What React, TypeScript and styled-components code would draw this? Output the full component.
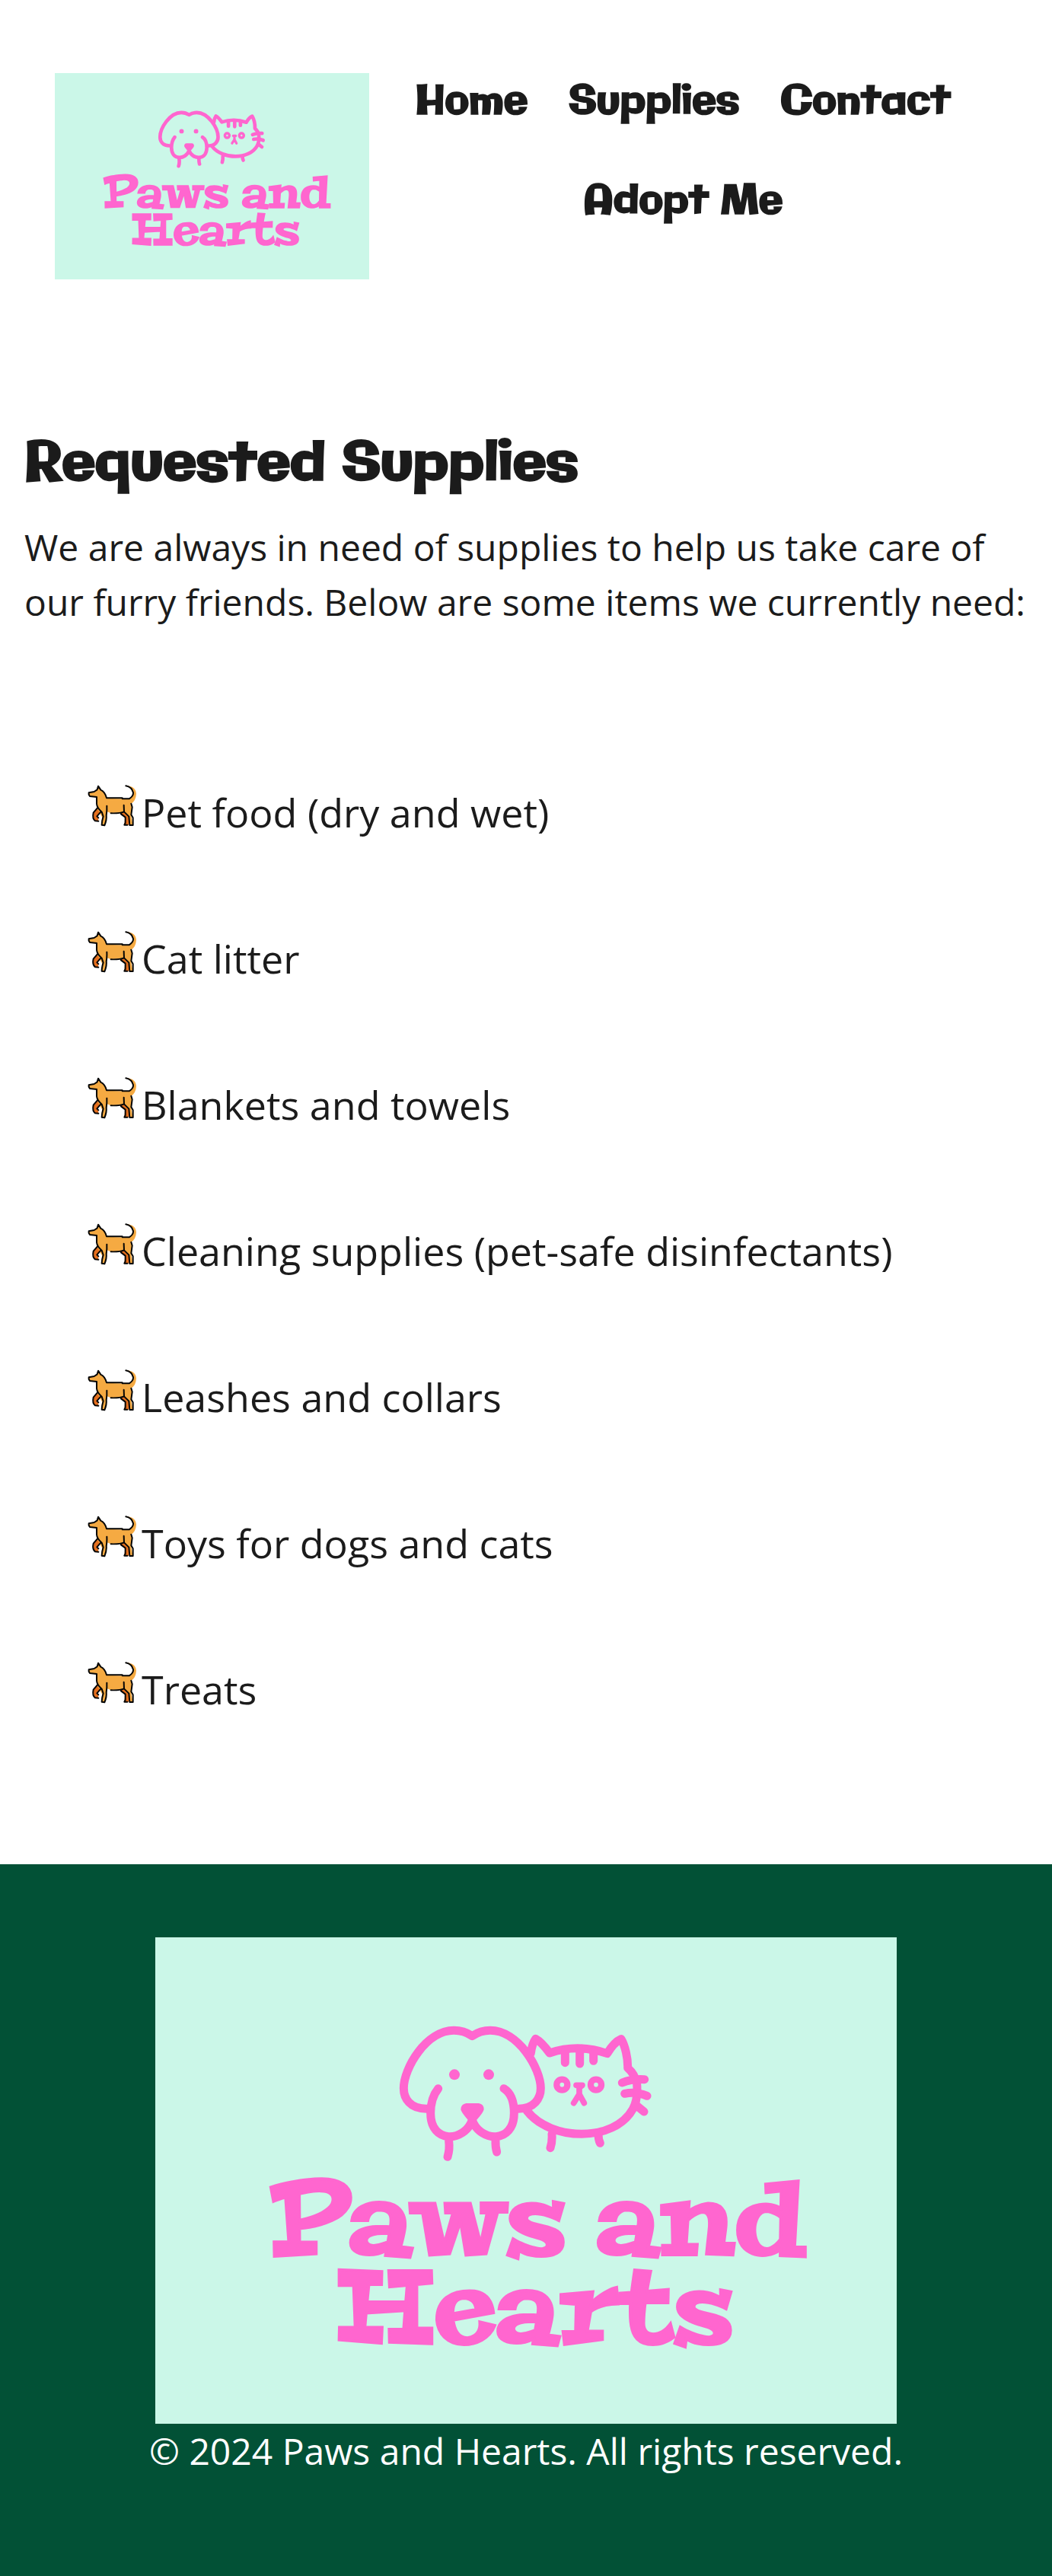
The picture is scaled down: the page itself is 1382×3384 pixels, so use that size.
import React from 'react';
import styled, { createGlobalStyle } from 'styled-components';

const ink = '#1b1b1b';
const pink = '#ff66cf';
const mint = '#cbf7e8';
const forest = '#025136';

const bodyFont = `'Open Sans', 'Noto Sans', sans-serif`;
const displayFont = `Galindo, Lato, 'Open Sans', sans-serif`;

const GlobalStyle = createGlobalStyle`
  *, *::before, *::after { box-sizing: border-box; }
  body {
    margin: 0;
    background: #fff;
    color: ${ink};
    font-family: ${bodyFont};
    font-size: 48px;
    line-height: 72px;
  }
`;

const Header = styled.header`
  display: grid;
  grid-template-columns: 1fr 2fr;
  align-items: start;
  padding: 96px 72px;
`;

const LogoLink = styled.a`
  display: block;
`;

const LogoArt = styled.svg`
  display: block;
  width: 100%;
  height: auto;
  background: ${mint};
`;

const LogoText = styled.text`
  font-family: Peralta, 'DejaVu Serif', serif;
  font-weight: 400;
  font-size: 132px;
  fill: ${pink};
  stroke: ${pink};
  stroke-width: 4px;
  text-anchor: middle;
`;

const NavList = styled.ul`
  display: flex;
  flex-wrap: wrap;
  justify-content: center;
  gap: 53px 54px;
  max-width: 760px;
  margin: 0 auto;
  padding: 0;
  list-style: none;
`;

const NavLink = styled.a`
  display: block;
  color: ${ink};
  font-family: ${displayFont};
  font-weight: 900;
  font-size: 52px;
  line-height: 78px;
  text-decoration: none;
`;

const Main = styled.main`
  padding: 99px 32px 78px;
`;

const Title = styled.h1`
  margin: 0 0 25px;
  font-family: ${displayFont};
  font-weight: 900;
  font-size: 72px;
  line-height: 96px;
`;

const Intro = styled.p`
  margin: 0;
`;

const SupplyList = styled.ul`
  margin: 200px 0 0;
  padding: 0 0 0 82px;
  list-style: none;
`;

const SupplyItem = styled.li`
  display: flex;
  gap: 4px;
  margin-bottom: 112px;
  font-size: 52px;
  line-height: 80px;
`;

const DogArt = styled.svg`
  flex: none;
  width: 68px;
  height: 60px;
`;

const Footer = styled.footer`
  display: flex;
  flex-direction: column;
  align-items: center;
  padding: 96px 72px 128px;
  background: ${forest};
  color: #fff;
  text-align: center;
`;

const FooterLogo = styled.div`
  width: 974px;
  max-width: 100%;
`;

const Copyright = styled.p`
  margin: 0;
`;

function Logo() {
  return (
    <LogoArt viewBox="0 0 974 639" role="img" aria-label="Paws and Hearts">
      <g transform="translate(296 75) scale(.33333)" fill="none" stroke={pink} strokeWidth="33" strokeLinecap="round" strokeLinejoin="round">
        <path d="M181 451C116 451 91 410 91 370C91 290 180 142 289 142Q328 142 361 164Q394 142 432 142C541 142 631 290 631 370C631 410 605 451 543 451" />
        <path d="M227 371Q197 408 197 468C197 590 330 583 361 495C392 583 526 590 526 468Q526 396 486 371" />
        <path d="M269 578Q273 611 264 640M453 575Q452 602 458 621" />
        <path d="M577 459C672 580 921 583 994 452Q1015 414 1010 352Q1003 315 974 290C975 250 963 201 948 176Q920 188 893 233Q779 193 666 231Q635 188 611 175Q597 194 592 232" />
        <path d="M727 225V269M785 218V273M839 225V262M952 348Q990 332 1040 335M962 391Q1005 381 1050 400M1005 435L1038 462M675 550Q677 582 669 605M858 550Q858 572 865 586" />
        <circle cx="715" cy="356" r="21" strokeWidth="25" />
        <circle cx="849" cy="356" r="21" strokeWidth="25" />
        <path d="M771 358H795L783 367V393L761 428M783 393L802 428" strokeWidth="23" />
        <g fill={pink} stroke="none">
          <circle cx="291" cy="316" r="21" />
          <circle cx="426" cy="316" r="21" />
          <path d="M337 429H387Q407 432 407 453Q406 464 379 494H344Q317 464 316 453Q317 432 337 429Z" />
        </g>
      </g>
      <LogoText x="502" y="416">Paws and</LogoText>
      <LogoText x="498" y="532">Hearts</LogoText>
    </LogoArt>
  );
}

function Dog() {
  return (
    <DogArt viewBox="42 51 204 180" aria-hidden="true">
      <g strokeLinecap="round" strokeLinejoin="round">
        <path fill="#e56f1e" d="M81 157L68 173Q63 194 74 203L88 206L87 192L80 189L98 168ZM174 174L193 191L190 221H207L207 190L191 169Z" />
        <path fill="#f5aa42" d="M50 94L72 90L83 82L87 68L97 83Q116 92 121 116L210 119Q226 107 225 94Q220 72 196 66Q235 68 237 98Q236 125 216 138L221 152L216 181L224 222H210L207 191L187 170L137 175L122 169L119 202L112 222H101L102 190L81 153V112L50 106Z" />
        <path fill="none" stroke="#050505" strokeWidth="6" d="M81 111V138Q82 153 101 170L107 188Q101 207 101 221L112 223Q121 201 119 183Q122 166 121 146M81 111L54 108L50 101V94L71 90L83 82L87 68L97 83Q114 91 120 115M120 115H182M182 118H209Q226 107 225 94Q220 72 196 67M188 143L189 169Q174 176 137 175M189 169L208 188L211 222H224L224 193L217 181L221 151L217 137M84 154L68 173Q63 196 75 205L88 206M97 170L82 187L88 193M177 178L194 191V213L190 221H202" />
      </g>
    </DogArt>
  );
}

const links = ['Home', 'Supplies', 'Contact', 'Adopt Me'];

const supplies = [
  'Pet food (dry and wet)',
  'Cat litter',
  'Blankets and towels',
  'Cleaning supplies (pet-safe disinfectants)',
  'Leashes and collars',
  'Toys for dogs and cats',
  'Treats',
];

export default function App() {
  return (
    <>
      <GlobalStyle />
      <Header>
        <LogoLink href="#home"><Logo /></LogoLink>
        <nav aria-label="Main">
          <NavList>
            {links.map((label) => (
              <li key={label}>
                <NavLink href={`#${label.toLowerCase().replace(' ', '-')}`}>{label}</NavLink>
              </li>
            ))}
          </NavList>
        </nav>
      </Header>
      <Main>
        <Title>Requested Supplies</Title>
        <Intro>
          We are always in need of supplies to help us take care of our furry friends. Below are some items we currently need:
        </Intro>
        <SupplyList>
          {supplies.map((item) => (
            <SupplyItem key={item}>
              <Dog />
              {item}
            </SupplyItem>
          ))}
        </SupplyList>
      </Main>
      <Footer>
        <FooterLogo><Logo /></FooterLogo>
        <Copyright>© 2024 Paws and Hearts. All rights reserved.</Copyright>
      </Footer>
    </>
  );
}
